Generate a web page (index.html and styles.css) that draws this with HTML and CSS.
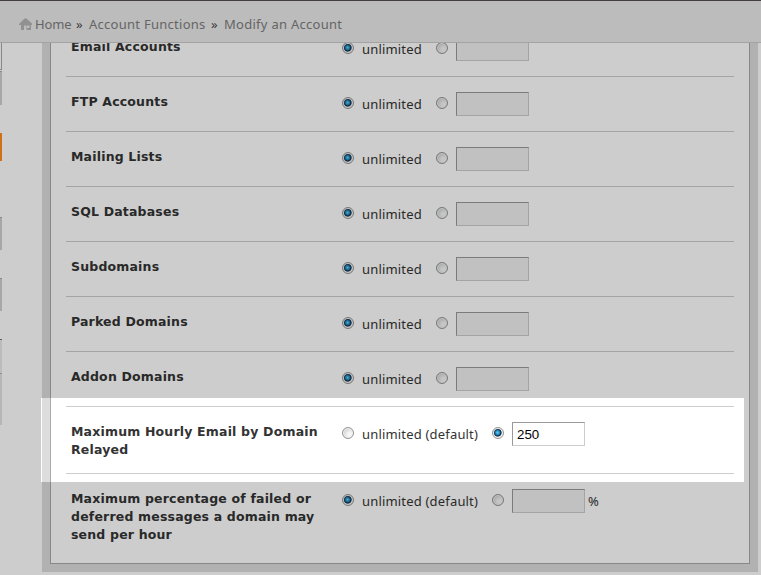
FILE: index.html
```
<!DOCTYPE html>
<html lang="en">
<head>
<meta charset="utf-8">
<title>Modify an Account</title>
<link rel="stylesheet" href="styles.css">
</head>
<body>
<header class="topbar">
  <svg class="home-icon" width="14" height="13" viewBox="0 0 14 13"><path d="M5.500 0.500h2L13 5.500V7h-1v5H7.500V7.500H5V12H2V7H0V6z"/><rect class="window" x="8" y="7.500" width="2.500" height="2.500"/></svg>
  <nav class="crumbs"><a class="crumb home">Home</a><span class="sep">»</span><a class="crumb functions">Account Functions</a><span class="sep">»</span><a class="crumb">Modify an Account</a></nav>
</header>
<main class="page">
  <aside class="rail">
    <i class="tab first"></i><i class="tab second"></i><i class="tab active"></i><i class="tab third"></i><i class="tab fourth"></i><i class="tab tall"></i><i class="tab last"></i>
  </aside>
  <section class="panel">
    <form class="rows">
      <div class="row"><label class="name">Email Accounts</label><input type="radio" name="a" checked><span class="choice">unlimited</span><input type="radio" name="a"><input class="amount" type="text" disabled></div>
      <div class="row"><label class="name">FTP Accounts</label><input type="radio" name="b" checked><span class="choice">unlimited</span><input type="radio" name="b"><input class="amount" type="text" disabled></div>
      <div class="row"><label class="name">Mailing Lists</label><input type="radio" name="c" checked><span class="choice">unlimited</span><input type="radio" name="c"><input class="amount" type="text" disabled></div>
      <div class="row"><label class="name">SQL Databases</label><input type="radio" name="d" checked><span class="choice">unlimited</span><input type="radio" name="d"><input class="amount" type="text" disabled></div>
      <div class="row"><label class="name">Subdomains</label><input type="radio" name="e" checked><span class="choice">unlimited</span><input type="radio" name="e"><input class="amount" type="text" disabled></div>
      <div class="row"><label class="name">Parked Domains</label><input type="radio" name="f" checked><span class="choice">unlimited</span><input type="radio" name="f"><input class="amount" type="text" disabled></div>
      <div class="row"><label class="name">Addon Domains</label><input type="radio" name="g" checked><span class="choice">unlimited</span><input type="radio" name="g"><input class="amount" type="text" disabled></div>
      <div class="row hourly"><label class="name">Maximum Hourly Email by Domain Relayed</label><input type="radio" name="h"><span class="choice wide">unlimited (default)</span><input type="radio" name="h" checked><input class="amount" type="text" value="250"></div>
      <div class="row failed"><label class="name">Maximum percentage of failed or deferred messages a domain may send per hour</label><input type="radio" name="i" checked><span class="choice wide">unlimited (default)</span><input type="radio" name="i"><input class="amount" type="text" disabled><span class="unit">%</span></div>
    </form>
  </section>
  <div class="spotlight"></div>
</main>
</body>
</html>
```
FILE: styles.css
```
* { box-sizing: border-box; }
body {
  margin: 0;
  height: 575px;
  overflow: hidden;
  background: #fff;
  color: #333;
  font: 13px/18px "Noto Sans", "Open Sans", sans-serif;
  display: flex;
  flex-direction: column;
}
.topbar {
  flex: none;
  height: 43px;
  padding: 5px 0 0 19px;
  display: flex;
  align-items: center;
  background: #bcbcbc;
  border-top: 1px solid #443f42;
  border-bottom: 1px solid #a3a3a3;
}
.home-icon { fill: #919191; margin-right: 2px; }
.home-icon .window { fill: #bcbcbc; }
.crumbs { display: flex; letter-spacing: 0.27px; color: #656565; white-space: nowrap; }
.crumb.home { width: 41px; letter-spacing: -0.1px; }
.crumb.functions { width: 122px; }
.sep { width: 13px; color: #3c3c3c; }

.page {
  position: relative;
  flex: 1;
  min-height: 0;
  overflow: hidden;
  display: flex;
  align-items: flex-start;
}
.rail { width: 2px; margin-right: 40px; display: flex; flex-direction: column; }
.tab { display: block; background: #d0d0d0; border-top: 1px solid #aaa; }
.tab.first { height: 27px; background: #fff; border: 0; border-right: 1px solid #aaa; border-bottom: 1px solid #aaa; }
.tab.second { height: 34px; margin-top: 1px; }
.tab.active { height: 28px; margin-top: 28px; background: #ff8e1c; border: 0; }
.tab.third { height: 33px; margin-top: 56px; }
.tab.fourth { height: 33px; margin-top: 28px; }
.tab.tall { height: 34px; margin-top: 28px; background: #eaeaea; border-color: #777; }
.tab.last { height: 52px; background: #e4e4e4; border-color: #b5b5b5; }

.panel { width: 716px; border: 8px solid #ddd; border-top: 0; }
.rows {
  display: flow-root;
  height: 521px;
  padding: 0 15px;
  border: 1px solid #aaa;
  border-top: 0;
}
.row {
  height: 55px;
  display: flex;
  align-items: flex-start;
  border-bottom: 1px solid #ccc;
}
.row:first-child { margin-top: -21px; }
.row.hourly { height: 67px; }
.row.failed { border-bottom: 0; }
.name {
  width: 276px;
  padding: 16px 15px 0 5px;
  font: 700 12.5px/18px "DejaVu Sans", sans-serif;
  letter-spacing: 0.18px;
}
input[type="radio"] {
  appearance: none;
  flex: none;
  width: 12px;
  height: 12px;
  margin: 20px 0 0;
  border: 1px solid #949494;
  border-radius: 50%;
  background: radial-gradient(circle at 65% 65%, #f6f6f6 20%, #c8cbcf 80%);
  box-shadow: inset 0 0 0 1px #f4f4f4;
}
input[type="radio"]:checked {
  background: radial-gradient(circle at 46% 46%, #6fd0f5 0, #1f8cc0 2px, #123250 3.300px, #2b4258 3.700px, #f0f0f0 4.500px);
}
.choice { width: 82px; padding: 18px 0 0 8px; letter-spacing: 0.18px; white-space: nowrap; }
.choice.wide { width: 138px; }
.amount {
  width: 73px;
  height: 24px;
  margin: 15px 0 0 8px;
  padding: 1px 4px;
  border: 1px solid #ccc;
  border-top-color: #999;
  border-left-color: #999;
  background: #fff;
  color: #000;
  font: 13.33px "Liberation Sans", Arial, sans-serif;
}
.amount:disabled { background: #f0f0f0; }
.unit { padding: 18px 0 0 3px; }

/* Dims the page around the highlighted row. */
.spotlight {
  position: absolute;
  left: 41px;
  top: 355px;
  width: 703px;
  height: 84px;
  box-shadow: 0 0 0 800px rgba(0, 0, 0, 0.196);
}
```
